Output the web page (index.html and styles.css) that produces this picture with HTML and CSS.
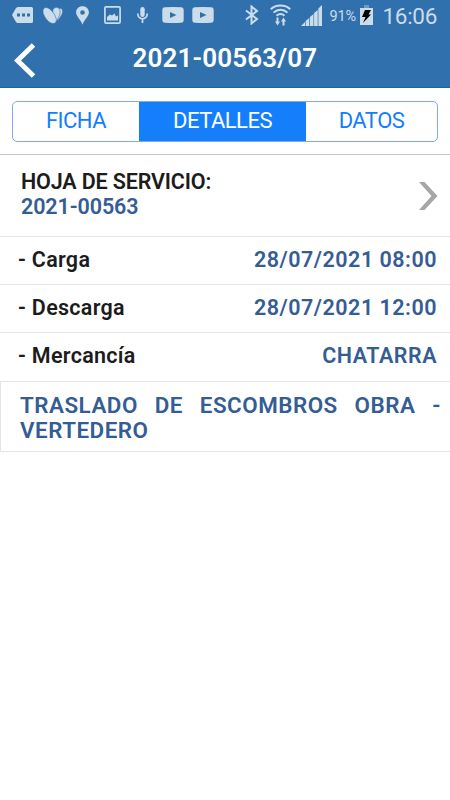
FILE: index.html
```
<!DOCTYPE html>
<html lang="es">
<head>
  <meta charset="UTF-8" />
  <meta name="viewport" content="width=device-width, initial-scale=1.0" />
  <title>Hoja de servicio</title>
  <link rel="stylesheet" href="styles.css">
</head>
<body>
  <header>
    <!-- Status bar -->
    <div class="status-bar">
      <div class="status-left">
        <svg width="21" height="16" viewBox="0 0 21 16"><path fill-rule="evenodd" d="M6 0h13.500q1.500 0 1.500 1.500v13q0 1.500-1.500 1.500H6q-1.500 0-2.300-1.500L0 8l3.700-6.500Q4.500 0 6 0zM5 6.500v3h3v-3zM10 6.500v3h3v-3zM15 6.500v3h3v-3z"/></svg>
        <svg width="20" height="17" viewBox="0 0 20 17"><g stroke="#3071ad" stroke-width="0.600"><path d="M10 16.200C14 15 20 8 19.700 4c-.3-3-4-4-6 0z"/><path d="M9 16.500c5-2 9-9 8-13-1-4-5-4-7-1z"/><path d="M10 16.500c4 0 4-4 2-8C10 4.500 6 .5 3 .5S-.5 4 .3 6.500C1.500 10.500 6 16.500 10 16.500z"/></g></svg>
        <svg width="15" height="19" viewBox="0 0 15 19"><path fill-rule="evenodd" d="M7.500.2c3.800 0 6.400 2.700 6.400 6.300 0 4-4.900 7-6.400 12.300C6 13.500 1.100 10.500 1.100 6.500 1.100 2.900 3.700.2 7.500.2zm0 4a2.300 2.300 0 1 0 0 4.600 2.300 2.300 0 0 0 0-4.600z"/></svg>
        <svg width="17" height="18" viewBox="0 0 17 18"><rect class="line" x="0.900" y="0.900" width="15.200" height="16.200" rx="1.200"/><path d="M3 14.500V11l3-2.500 2 1 2.500-2 1.500 3 2-1v5z"/></svg>
        <svg width="11" height="16" viewBox="0 0 11 16"><rect x="3.300" y="0" width="4.400" height="10" rx="2.200"/><path class="line" d="M.8 6.500c0 7 9.400 7 9.400 0M5.500 12v4"/></svg>
        <svg width="22" height="16" viewBox="0 0 22 16"><path fill-rule="evenodd" d="M3 .3Q11-.3 19 .3q2.700.2 2.700 3v9.400q0 2.800-2.700 3-8 .6-16 0-2.700-.2-2.700-3V3.300Q.3.500 3 .3zM8 5v6l6.500-3z"/></svg>
        <svg width="22" height="16" viewBox="0 0 22 16"><path fill-rule="evenodd" d="M3 .3Q11-.3 19 .3q2.700.2 2.700 3v9.400q0 2.800-2.700 3-8 .6-16 0-2.700-.2-2.700-3V3.300Q.3.500 3 .3zM8 5v6l6.500-3z"/></svg>
      </div>
      <div class="status-right">
        <svg class="bluetooth" width="14" height="20" viewBox="0 0 14 20"><path class="line" d="M1 5.500l11 8.500-5.500 4.500v-17L12 6 1 14.500"/></svg>
        <svg class="wifi" width="21" height="22" viewBox="0 0 21 22"><path class="line" d="M.8 5.200c5-5 14.400-5 19.400 0M3.500 8.600c4-3.800 10-3.800 14 0M6.500 11.700c2.500-2.200 5.500-2.200 8 0"/><path d="M6.500 13.500h2v4H10l-2.500 4-2.500-4h1.500zM12.500 21.500h2v-4H16l-2.500-4-2.500 4h1.500z"/></svg>
        <svg class="signal" width="21" height="21" viewBox="0 0 21 21"><path d="M0 21l4-4v4zM4.600 16l3.600-3v8H4.600zM8.900 12l3.600-3v12H8.900zM13.100 8l3.600-3v16h-3.600zM17.400 3.500L21 0v21h-3.600z"/></svg>
        <span class="percent">91%</span>
        <svg class="battery" width="13" height="20" viewBox="0 0 13 20"><path class="tip" d="M4 0h5v3H4z"/><path d="M0 3h13v17H0z"/><path class="bolt" d="M5 5h6L8.500 9.500H11L3 18l2.500-6H2z"/></svg>
        <span class="clock">16:06</span>
      </div>
    </div>
    <!-- Title -->
    <div class="title-bar">
      <svg class="back" width="22" height="36" viewBox="0 0 22 36"><path d="M19.500 2L3.500 17.500 19.500 33"/></svg>
      <h1>2021-00563/07</h1>
    </div>
  </header>

  <main>
    <nav>
      <ul class="tabs">
        <li>FICHA</li>
        <li class="active">DETALLES</li>
        <li>DATOS</li>
      </ul>
    </nav>

    <section class="sheet">
      <div>
        <h2>HOJA DE SERVICIO:</h2>
        <p>2021-00563</p>
      </div>
      <svg width="19" height="28" viewBox="0 0 19 28"><path d="M0 0h5.500L18.500 14 5.500 28H0L12.500 14z"/></svg>
    </section>

    <div class="row"><span>- Carga</span><span class="value">28/07/2021 08:00</span></div>
    <div class="row"><span>- Descarga</span><span class="value">28/07/2021 12:00</span></div>
    <div class="row last"><span>- Mercancía</span><span class="value">CHATARRA</span></div>

    <p class="notes">TRASLADO DE ESCOMBROS OBRA - VERTEDERO</p>
  </main>
</body>
</html>
```

FILE: styles.css
```
* {
  box-sizing: border-box;
}
body {
  font-family: Roboto, sans-serif;
  margin: 0;
  background-color: #fff;
  color: #1c1c1c;
}
h1, h2, p, ul {
  margin: 0;
  padding: 0;
}
svg {
  display: block;
  flex: none;
}
header {
  height: 88px;
  background-color: #3071ad;
  border-bottom: 1px solid #1762a8;
  color: #fff;
}
/* Status bar */
.status-bar {
  display: flex;
  justify-content: space-between;
  height: 30px;
  padding: 0 13px 0 12px;
  color: #cbdceb;
  fill: #cbdceb;
}
.status-left, .status-right {
  display: flex;
  align-items: center;
}
.status-left {
  gap: 8px;
}
.status-left svg:nth-child(n+2) {
  margin-left: 2px;
}
.status-left svg:nth-child(3) {
  margin-left: 4px;
}
.status-left svg:nth-child(4) {
  margin-left: 6px;
}
.status-left svg:nth-child(5) {
  margin-left: 8px;
}
.status-left svg:nth-child(n+6) {
  margin-left: 6px;
}
.status-left svg:nth-child(7) {
  margin-left: 0;
}
.line {
  fill: none;
  stroke: #cbdceb;
  stroke-width: 1.7;
}
.bluetooth .line, .wifi .line {
  stroke-width: 2;
}
.wifi {
  margin: 0 10px 1px 11px;
}
.percent {
  width: 36px;
  padding: 2px 0 0 7px;
  font-size: 14.5px;
  letter-spacing: -0.1px;
}
.battery {
  margin: 0 9px 0 2px;
}
.tip {
  fill: #6c9bc5;
}
.bolt {
  fill: #000;
}
.clock {
  font-size: 22.5px;
  line-height: 30px;
  padding-top: 2px;
  letter-spacing: -0.3px;
}
/* Title */
.title-bar {
  display: grid;
  grid-template-columns: 36px 1fr 36px;
  align-items: center;
  height: 57px;
}
.back {
  margin-left: 14px;
  margin-top: 5px;
  fill: none;
  stroke: #fff;
  stroke-width: 5;
}
h1 {
  font-size: 26px;
  font-weight: 600;
  line-height: 57px;
  letter-spacing: 0.15px;
  text-align: center;
}
/* Tabs */
nav {
  height: 67px;
  padding: 13px 12px 0;
  border-bottom: 1px solid #c8c8ca;
}
.tabs {
  display: grid;
  grid-template-columns: 126px 167px 1fr;
  height: 41px;
  border: 1px solid #82a9f5;
  border-radius: 5px;
  overflow: hidden;
  list-style-type: none;
}
.tabs li {
  color: #147efb;
  font-size: 22px;
  letter-spacing: -0.5px;
  line-height: 37px;
  text-align: center;
}
.tabs .active {
  background-color: #147efb;
  color: #fff;
}
/* Service sheet */
.sheet {
  display: flex;
  justify-content: space-between;
  align-items: center;
  height: 82px;
  padding: 0 12px 0 21px;
  border-bottom: 1px solid #e4e4e4;
}
.sheet div {
  padding-bottom: 3px;
}
.sheet h2, .sheet p {
  font-size: 21.5px;
  font-weight: 600;
  line-height: 25px;
}
.sheet h2 {
  letter-spacing: -0.15px;
}
.sheet p {
  letter-spacing: -0.1px;
}
.sheet p, .value, .notes {
  color: #345d94;
}
.sheet svg {
  fill: #a6a6a6;
}
/* Detail rows */
.row {
  display: flex;
  justify-content: space-between;
  height: 48px;
  padding: 0 13px 0 18px;
  border-bottom: 1px solid #e4e4e4;
  font-size: 21.5px;
  font-weight: 600;
  line-height: 46px;
  letter-spacing: 0.3px;
}
.row.last {
  height: 49px;
}
.value {
  letter-spacing: 0.5px;
}
.notes {
  height: 70px;
  padding: 11px 9px 0 19px;
  border: 1px solid #e4e4e4;
  border-width: 0 0 1px 1px;
  font-size: 22.4px;
  font-weight: 600;
  line-height: 25px;
  letter-spacing: 0.5px;
  text-align: justify;
}
```
